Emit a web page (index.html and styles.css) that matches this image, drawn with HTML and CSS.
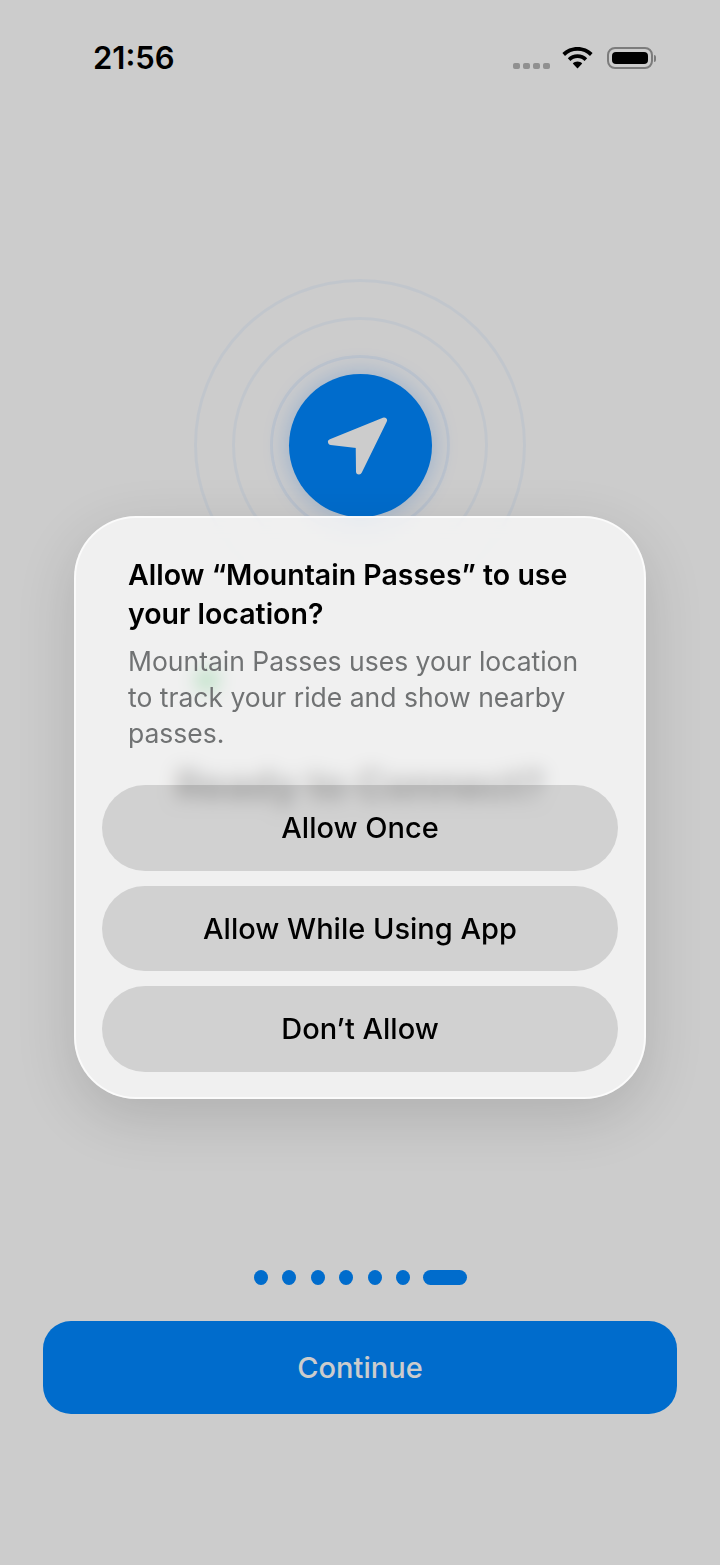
FILE: index.html
```html
<!DOCTYPE html>
<html lang="en">
<head>
    <meta charset="UTF-8">
    <meta name="viewport" content="width=device-width, initial-scale=1.0">
    <title>Mountain Passes</title>
    <link rel="stylesheet" href="styles.css">
</head>
<body>
    <div class="screen">
        <!-- Status bar -->
        <div class="status-bar">
            <span class="clock">21:56</span>
            <div class="status-icons">
                <div class="signal">
                    <span class="signal-dot"></span>
                    <span class="signal-dot"></span>
                    <span class="signal-dot"></span>
                    <span class="signal-dot"></span>
                </div>
                <svg class="wifi" width="31" height="22" viewBox="0 0 31 22">
                    <path d="M15.5 0C9.6 0 4.3 2.3 0.4 6.1L3 8.9C6.2 5.7 10.6 3.8 15.5 3.8S24.800 5.700 28 8.900L30.600 6.100C26.700 2.300 21.400 0 15.500 0Z"/>
                    <path d="M15.500 7.300C11.700 7.300 8.300 8.800 5.800 11.300L8.400 14C10.200 12.200 12.700 11.100 15.500 11.100S20.800 12.200 22.600 14L25.200 11.300C22.700 8.800 19.300 7.300 15.500 7.300Z"/>
                    <path d="M15.500 14.500C13.700 14.500 12 15.200 10.800 16.400L15.500 21.500L20.200 16.400C19 15.200 17.300 14.500 15.500 14.500Z"/>
                </svg>
                <div class="battery">
                    <div class="battery-body"><div class="battery-fill"></div></div>
                    <div class="battery-nub"></div>
                </div>
            </div>
        </div>

        <!-- Location rings -->
        <div class="hero">
            <div class="ring ring-outer">
                <div class="ring ring-middle">
                    <div class="ring ring-inner">
                        <div class="location-badge">
                            <svg width="70" height="70" viewBox="0 0 70 70">
                                <path class="location-arrow" d="M59 10.500L6 32L33.700 35.200L34 61.500Z"/>
                            </svg>
                        </div>
                    </div>
                </div>
            </div>
        </div>

        <div class="ride-dot"></div>
        <h1 class="page-title">Ready to Connect?</h1>

        <!-- Pager and main action -->
        <div class="footer">
            <div class="pager">
                <span class="pager-dot"></span>
                <span class="pager-dot"></span>
                <span class="pager-dot"></span>
                <span class="pager-dot"></span>
                <span class="pager-dot"></span>
                <span class="pager-dot"></span>
                <span class="pager-dot active"></span>
            </div>
            <button type="button" class="btn-continue">Continue</button>
        </div>

        <div class="scrim"></div>

        <!-- Permission alert -->
        <div class="dialog">
            <h2 class="dialog-title">Allow “Mountain Passes” to use your location?</h2>
            <p class="dialog-text">Mountain Passes uses your location to track your ride and show nearby passes.</p>
            <div class="dialog-actions">
                <button type="button" class="btn-dialog">Allow Once</button>
                <button type="button" class="btn-dialog">Allow While Using App</button>
                <button type="button" class="btn-dialog">Don’t Allow</button>
            </div>
        </div>
    </div>
</body>
</html>
```

FILE: styles.css
```css
* {
    box-sizing: border-box;
}

body {
    margin: 0;
    background: #fff;
    font-family: Inter, "Noto Sans", sans-serif;
    color: #000;
}

.screen {
    position: relative;
    display: flex;
    flex-direction: column;
    width: 720px;
    height: 1565px;
    overflow: hidden;
    background: radial-gradient(circle at 360px 445px, #fff 0, #fff 200px, #fff 100%);
}

/* Status bar */
.status-bar {
    display: flex;
    justify-content: space-between;
    align-items: flex-start;
    height: 100px;
    padding: 39px 64px 0 93px;
}

.clock {
    font-size: 31px;
    line-height: 38px;
    font-weight: 600;
}

.status-icons {
    display: flex;
    align-items: flex-start;
    margin-top: 8px;
}

.signal {
    display: flex;
    gap: 3px;
    margin-top: 16px;
    margin-right: 12px;
}

.signal-dot {
    width: 7px;
    height: 6px;
    border-radius: 2px;
    background: #b4b4b4;
}

.wifi {
    display: block;
    fill: #000;
    margin-right: 14px;
}

.battery {
    display: flex;
    align-items: center;
}

.battery-body {
    width: 46px;
    height: 22px;
    padding: 3px;
    border: 2px solid #9c9c9c;
    border-radius: 8px;
}

.battery-fill {
    height: 100%;
    border-radius: 4px;
    background: #000;
}

.battery-nub {
    width: 2px;
    height: 7px;
    margin-left: 1px;
    border-radius: 0 2px 2px 0;
    background: #9c9c9c;
}

/* Location rings */
.hero {
    display: flex;
    justify-content: center;
    margin-top: 179px;
}

.ring {
    display: flex;
    justify-content: center;
    align-items: center;
    flex-shrink: 0;
    border: 3px solid rgba(0, 120, 255, 0.05);
    border-radius: 50%;
}

.ring-outer {
    width: 332px;
    height: 332px;
}

.ring-middle {
    width: 256px;
    height: 256px;
}

.ring-inner {
    width: 180px;
    height: 180px;
    border-color: rgba(0, 120, 255, 0.07);
}

.location-badge {
    display: flex;
    justify-content: center;
    align-items: center;
    flex-shrink: 0;
    width: 143px;
    height: 143px;
    border-radius: 50%;
    background: #0088ff;
    box-shadow: 0 0 26px rgba(0, 120, 255, 0.28);
}

.location-arrow {
    fill: #fff;
    stroke: #fff;
    stroke-width: 6;
    stroke-linejoin: round;
}

/* Content under the alert */
.ride-dot {
    width: 24px;
    height: 24px;
    margin: 57px 0 0 195px;
    border-radius: 50%;
    background: #34c759;
}

.page-title {
    margin: 69px 0 0;
    font-size: 40px;
    line-height: 48px;
    font-weight: 700;
    text-align: center;
}

/* Pager and main action */
.footer {
    display: flex;
    flex-direction: column;
    align-items: center;
    gap: 36px;
    margin-top: auto;
    padding: 0 43px 151px;
}

.pager {
    display: flex;
    gap: 14.500px;
    height: 15px;
}

.pager-dot {
    width: 14px;
    height: 15px;
    border-radius: 50%;
    background: #0088ff;
}

.pager-dot.active {
    width: 44px;
    margin-left: -2px;
    border-radius: 8px;
}

.btn-continue {
    width: 100%;
    height: 93px;
    border: none;
    border-radius: 28px;
    background: #0088ff;
    color: #fff;
    font-family: inherit;
    font-size: 29px;
    font-weight: 500;
}

/* Alert */
.scrim {
    position: absolute;
    top: 0;
    left: 0;
    right: 0;
    bottom: 0;
    background: rgba(0, 0, 0, 0.2);
}

.dialog {
    position: absolute;
    top: 516px;
    left: 74px;
    width: 572px;
    height: 583px;
    padding: 37px 26px 0;
    border: 2px solid rgba(255, 255, 255, 0.7);
    border-radius: 62px;
    background: rgba(255, 255, 255, 0.7);
    backdrop-filter: blur(9px);
    box-shadow: 0 18px 60px rgba(0, 0, 0, 0.14);
}

.dialog-title {
    margin: 0;
    padding: 0 26px;
    font-size: 28.500px;
    line-height: 39px;
    font-weight: 600;
}

.dialog-text {
    margin: 10px 0 0;
    padding: 0 26px;
    color: #707273;
    font-size: 26.500px;
    line-height: 36px;
}

.dialog-actions {
    display: flex;
    flex-direction: column;
    gap: 15px;
    margin-top: 34px;
}

.btn-dialog {
    height: 85.500px;
    border: none;
    border-radius: 43px;
    background: rgba(0, 0, 0, 0.13);
    color: #000;
    font-family: inherit;
    font-size: 29px;
    font-weight: 500;
}
```
